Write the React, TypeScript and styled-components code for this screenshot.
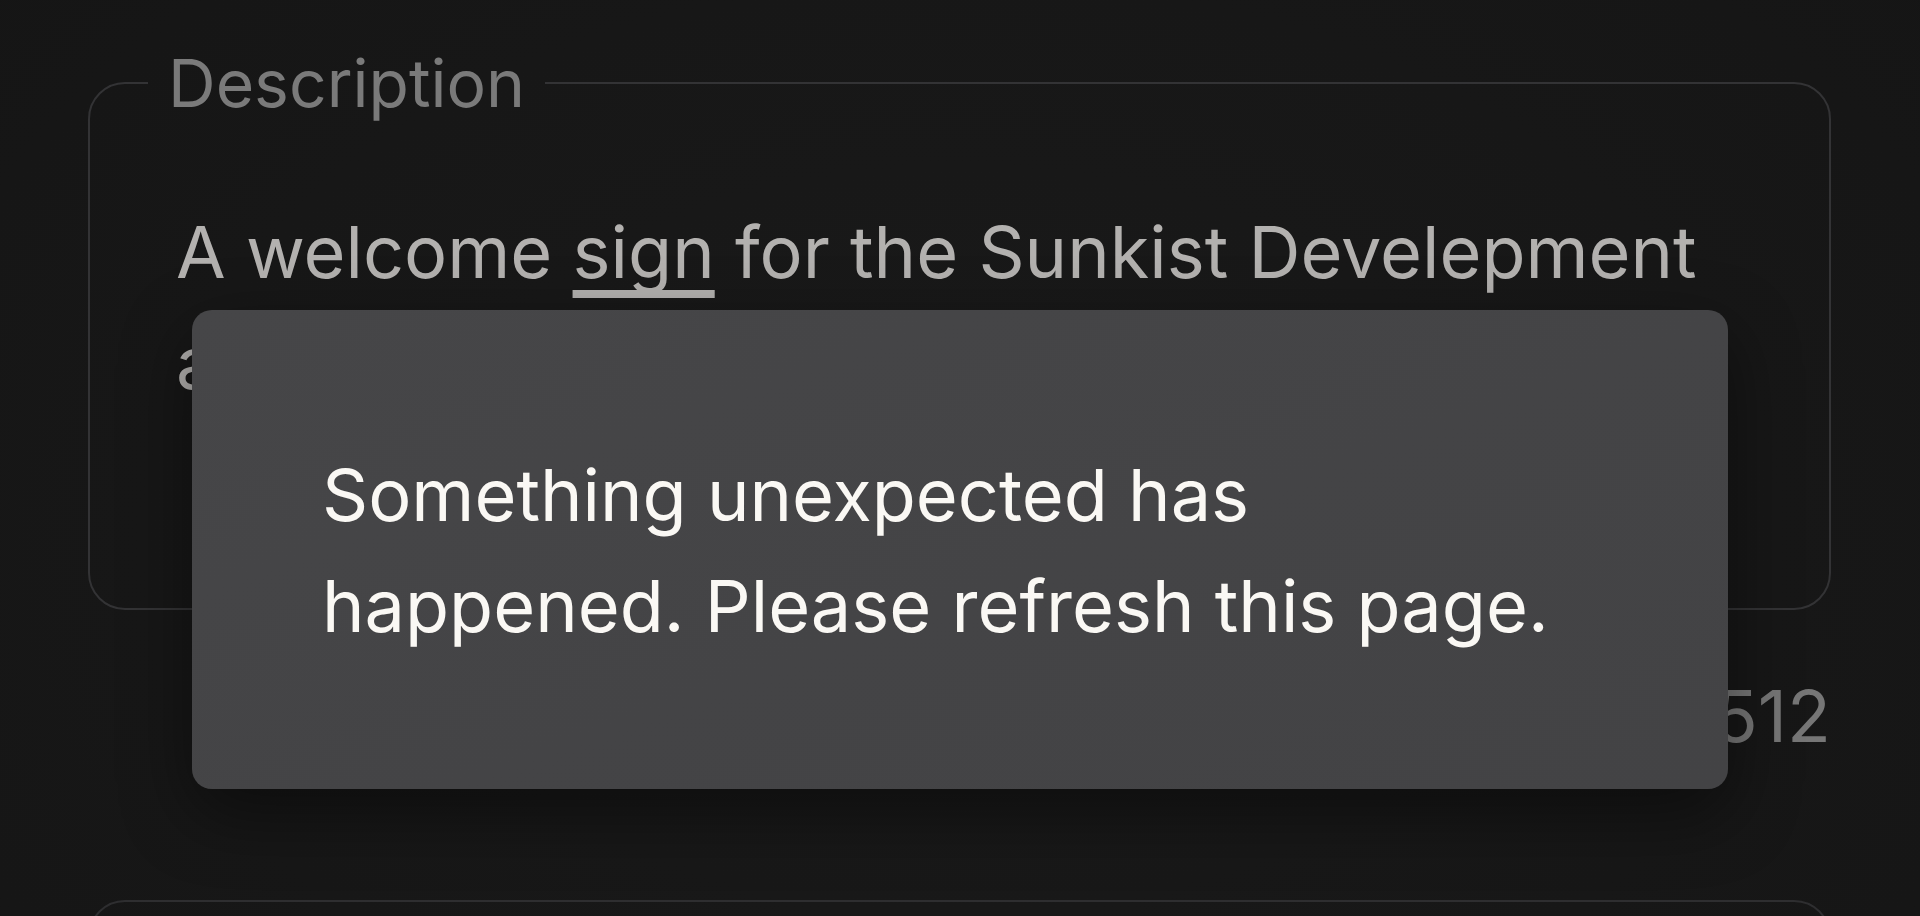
import React from "react";
import styled, { createGlobalStyle } from "styled-components";

const GlobalStyle = createGlobalStyle`
  html, body {
    margin: 0;
    padding: 0;
    background: #171717;
  }
  body {
    font-family: "Inter", "Liberation Sans", sans-serif;
    overflow: hidden;
  }
`;

const Page = styled.div`
  min-height: 100vh;
  box-sizing: border-box;
  padding: 44px 89px 0 88px;
  display: flex;
  flex-direction: column;
  background: radial-gradient(
    ellipse at 50% 45%,
    #1a1a1a 0%,
    #171717 60%,
    #151515 100%
  );
`;

const Field = styled.fieldset`
  margin: 0;
  padding: 0;
  min-width: 0;
  border: 2px solid #333335;
  border-radius: 37px;
`;

const FieldLegend = styled.legend`
  margin-left: 58px;
  padding: 0 20px;
  font-size: 66px;
  line-height: 78px;
  color: #7a7a7a;
`;

const FieldText = styled.div`
  box-sizing: border-box;
  min-height: 333px;
  margin: 74px 88px 79px 86px;
  font-size: 72px;
  line-height: 111px;
  color: #b3b1af;
`;

const Marked = styled.span`
  text-decoration: underline;
  text-decoration-thickness: 8px;
  text-underline-offset: 12px;
  text-decoration-skip-ink: none;
`;

const Counter = styled.div`
  margin-top: 63px;
  font-size: 72px;
  line-height: 86px;
  text-align: right;
  color: #767676;
`;

const NextField = styled.div`
  margin-top: 141px;
  height: 300px;
  border: 2px solid #2e2e30;
  border-radius: 37px;
`;

const Toast = styled.div`
  position: fixed;
  top: 310px;
  left: 50%;
  transform: translateX(-50%);
  width: 1536px;
  height: 479px;
  box-sizing: border-box;
  padding: 0 130px;
  display: flex;
  align-items: center;
  border-radius: 20px;
  background: linear-gradient(160deg, #464648 0%, #444446 55%, #434345 100%);
  box-shadow: 0 24px 70px rgba(0, 0, 0, 0.45);
`;

const ToastText = styled.p`
  margin: 0;
  font-size: 72px;
  line-height: 111px;
  color: #faf8f4;
`;

const App = () => {
  return (
    <>
      <GlobalStyle />
      <Page>
        <Field>
          <FieldLegend>Description</FieldLegend>
          <FieldText>
            A welcome <Marked>sign</Marked> for the Sunkist Develepment area
            near the old orchard.
          </FieldText>
        </Field>
        <Counter>61 / 512</Counter>
        <NextField />
      </Page>
      <Toast role="alert">
        <ToastText>
          Something unexpected has happened. Please refresh this page.
        </ToastText>
      </Toast>
    </>
  );
};

export default App;
